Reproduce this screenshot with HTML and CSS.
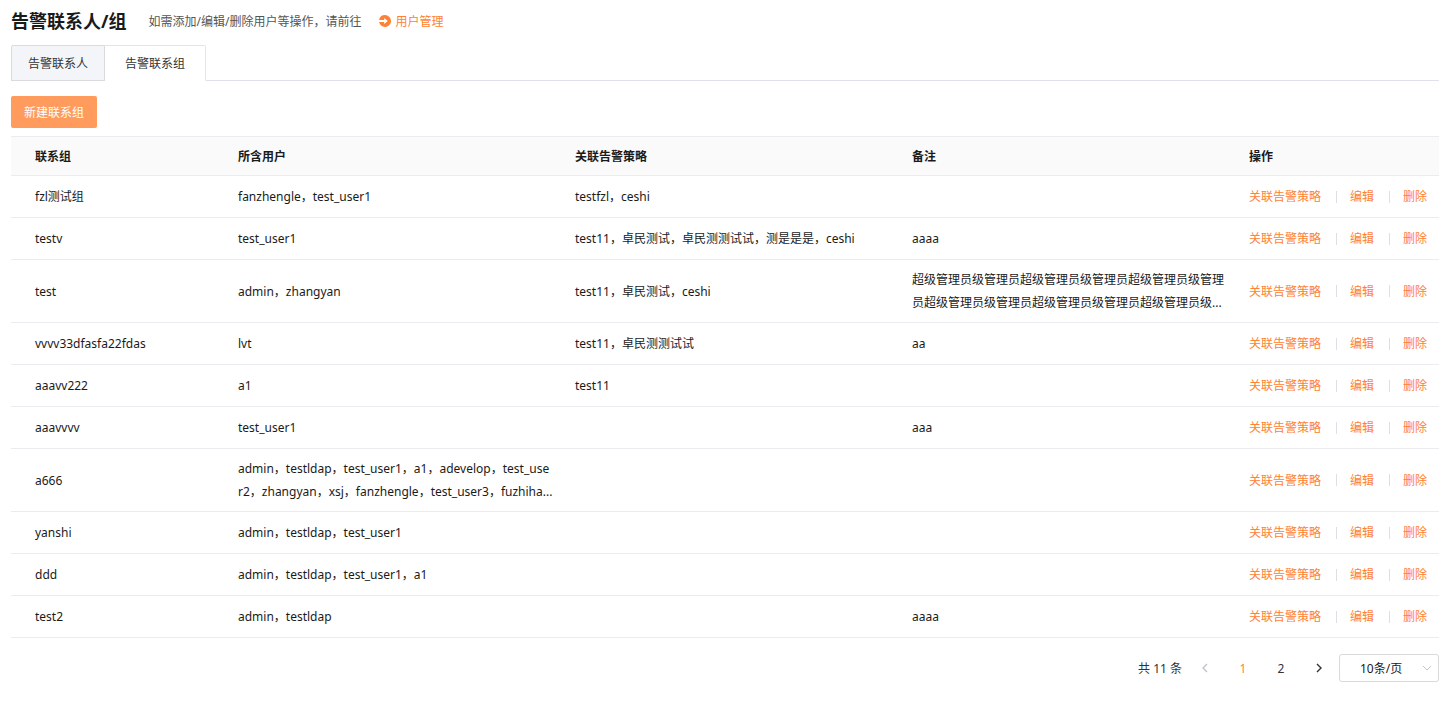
FILE: index.html
```html
<!DOCTYPE html>
<html lang="zh-CN">
<head>
<meta charset="utf-8">
<title>告警联系人/组</title>
<link rel="stylesheet" href="styles.css">
</head>
<body>
<main class="page">
  <header class="page-header">
    <h1 class="page-title">告警联系人/组</h1>
    <p class="page-hint">如需添加/编辑/删除用户等操作，请前往</p>
    <a class="page-link" href="#users">
      <svg class="page-link-icon" viewBox="0 0 12 12" aria-hidden="true"><path fill="currentColor" d="M6 0a6 6 0 1 1-5.9 7H5.2v2L8.8 6 5.2 3v2H.1A6 6 0 0 1 6 0Z"/></svg>
      用户管理
    </a>
  </header>

  <nav class="tabs">
    <button class="tab" type="button">告警联系人</button>
    <button class="tab tab-active" type="button">告警联系组</button>
  </nav>

  <button class="create-button" type="button">新建联系组</button>

  <table class="groups">
    <colgroup><col class="col-name"><col><col><col><col class="col-actions"></colgroup>
    <thead>
      <tr><th>联系组</th><th>所含用户</th><th>关联告警策略</th><th>备注</th><th>操作</th></tr>
    </thead>
    <tbody>
      <tr><td>fzl测试组</td><td>fanzhengle，test_user1</td><td>testfzl，ceshi</td><td></td><td><div class="actions"><a href="#policy">关联告警策略</a><a href="#edit">编辑</a><a href="#delete">删除</a></div></td></tr>
      <tr><td>testv</td><td>test_user1</td><td>test11，卓民测试，卓民测测试试，测是是是，ceshi</td><td>aaaa</td><td><div class="actions"><a href="#policy">关联告警策略</a><a href="#edit">编辑</a><a href="#delete">删除</a></div></td></tr>
      <tr><td>test</td><td>admin，zhangyan</td><td>test11，卓民测试，ceshi</td><td><div class="summary">超级管理员级管理员超级管理员级管理员超级管理员级管理员超级管理员级管理员超级管理员级管理员超级管理员级...</div></td><td><div class="actions"><a href="#policy">关联告警策略</a><a href="#edit">编辑</a><a href="#delete">删除</a></div></td></tr>
      <tr><td>vvvv33dfasfa22fdas</td><td>lvt</td><td>test11，卓民测测试试</td><td>aa</td><td><div class="actions"><a href="#policy">关联告警策略</a><a href="#edit">编辑</a><a href="#delete">删除</a></div></td></tr>
      <tr><td>aaavv222</td><td>a1</td><td>test11</td><td></td><td><div class="actions"><a href="#policy">关联告警策略</a><a href="#edit">编辑</a><a href="#delete">删除</a></div></td></tr>
      <tr><td>aaavvvv</td><td>test_user1</td><td></td><td>aaa</td><td><div class="actions"><a href="#policy">关联告警策略</a><a href="#edit">编辑</a><a href="#delete">删除</a></div></td></tr>
      <tr><td>a666</td><td><div class="summary summary-users">admin，testldap，test_user1，a1，adevelop，test_use<br>r2，zhangyan，xsj，fanzhengle，test_user3，fuzhiha...</div></td><td></td><td></td><td><div class="actions"><a href="#policy">关联告警策略</a><a href="#edit">编辑</a><a href="#delete">删除</a></div></td></tr>
      <tr><td>yanshi</td><td>admin，testldap，test_user1</td><td></td><td></td><td><div class="actions"><a href="#policy">关联告警策略</a><a href="#edit">编辑</a><a href="#delete">删除</a></div></td></tr>
      <tr><td>ddd</td><td>admin，testldap，test_user1，a1</td><td></td><td></td><td><div class="actions"><a href="#policy">关联告警策略</a><a href="#edit">编辑</a><a href="#delete">删除</a></div></td></tr>
      <tr><td>test2</td><td>admin，testldap</td><td></td><td>aaaa</td><td><div class="actions"><a href="#policy">关联告警策略</a><a href="#edit">编辑</a><a href="#delete">删除</a></div></td></tr>
    </tbody>
  </table>

  <footer class="pagination">
    <span class="total">共 11 条</span>
    <button class="pager pager-prev" type="button" aria-label="上一页" disabled><svg viewBox="0 0 8 10" aria-hidden="true"><path d="M6 1 2 5l4 4"/></svg></button>
    <button class="pager pager-current" type="button">1</button>
    <button class="pager" type="button">2</button>
    <button class="pager pager-next" type="button" aria-label="下一页"><svg viewBox="0 0 8 10" aria-hidden="true"><path d="m2 1 4 4-4 4"/></svg></button>
    <div class="page-size">
      <select aria-label="每页条数"><option>10条/页</option><option>20条/页</option><option>50条/页</option></select>
      <svg class="page-size-arrow" viewBox="0 0 10 6" aria-hidden="true"><path d="m1 1 4 4 4-4"/></svg>
    </div>
  </footer>
</main>
</body>
</html>
```
FILE: styles.css
```css
* { box-sizing: border-box; }

body {
  margin: 0;
  background: #fff;
  color: #1a1a1a;
  font: 12px/23px "Noto Sans", "Noto Sans CJK SC", sans-serif;
}

button, select { font: inherit; color: inherit; cursor: pointer; }
a { color: #ff8133; text-decoration: none; }

.page { padding: 0 16px 16px 11px; }

.page-header {
  display: flex;
  align-items: center;
  height: 45px;
  padding-bottom: 3px;
}
.page-title { margin: 0 22px 0 0; font-size: 18px; font-weight: 700; line-height: 26px; }
.page-hint { margin: 0 18px 0 0; color: #555; }
.page-link { display: flex; align-items: center; gap: 4px; }
.page-link-icon { width: 12px; height: 12px; }

.tabs { display: flex; height: 36px; border-bottom: 1px solid #dfe0eb; }
.tab {
  height: 36px;
  padding: 0 16px;
  border: 1px solid #d9dbde;
  border-radius: 2px 0 0 0;
  background: #f3f5f8;
  color: #333;
}
.tab-active {
  padding: 0 20px;
  border-color: #e4e4ec;
  border-left: 0;
  border-bottom-color: #fff;
  border-radius: 0 2px 0 0;
  background: #fff;
}

.create-button {
  display: block;
  height: 32px;
  margin: 15px 0 8px;
  padding: 0 13px;
  border: 0;
  border-radius: 2px;
  background: #ff9b5c;
  color: #fff;
}

.groups { width: 100%; border-collapse: separate; border-spacing: 0; table-layout: fixed; }
.col-name { width: 203px; }
.col-actions { width: 214px; }
.groups th, .groups td {
  padding: 0 0 0 24px;
  border-bottom: 1px solid #ebebf0;
  text-align: left;
  vertical-align: middle;
}
.groups th {
  height: 40px;
  border-top: 1px solid #ebebf3;
  background: #fafafa;
  font-weight: 700;
}
.groups td { height: 42px; }
.summary { margin: 8px 0; word-break: break-all; }
.summary-users { white-space: nowrap; }

.actions { display: flex; align-items: center; white-space: nowrap; }
.actions a + a { display: flex; align-items: center; }
.actions a + a::before {
  width: 1px;
  height: 12px;
  margin: 0 13px 0 15px;
  background: #dcdfe6;
  content: "";
}

.pagination {
  display: flex;
  align-items: center;
  justify-content: flex-end;
  gap: 2px;
  padding-top: 16px;
}
.total { margin-right: 3px; color: #333; }
.pager {
  display: flex;
  align-items: center;
  justify-content: center;
  width: 36px;
  height: 28px;
  padding: 0;
  border: 0;
  background: none;
  color: #333;
}
.pager svg { width: 8px; height: 10px; }
.pager path, .page-size path { fill: none; stroke: currentColor; stroke-width: 1.4; }
.pager-prev { color: #c0c4cc; }
.pager-current { color: #ff8133; }

.page-size { display: grid; align-items: center; }
.page-size select {
  grid-area: 1 / 1;
  width: 100px;
  height: 28px;
  padding: 0 20px;
  border: 1px solid #d9d9d9;
  border-radius: 3px;
  appearance: none;
  background: #fff;
}
.page-size-arrow {
  grid-area: 1 / 1;
  justify-self: end;
  width: 10px;
  height: 6px;
  margin-right: 7px;
  color: #c0c4cc;
  pointer-events: none;
}
.page-size-arrow path { stroke-width: 1; }
```
